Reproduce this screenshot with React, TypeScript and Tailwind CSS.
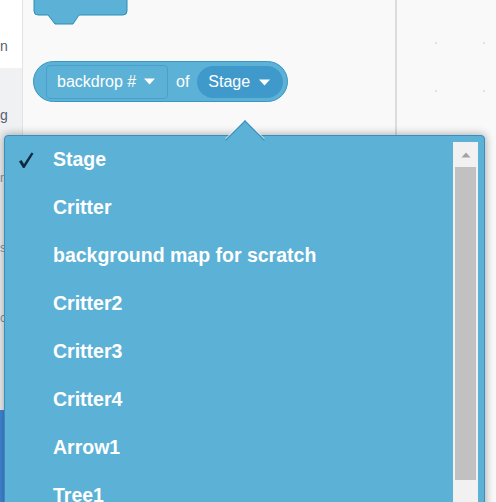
const items = [
  "Stage",
  "Critter",
  "background map for scratch",
  "Critter2",
  "Critter3",
  "Critter4",
  "Arrow1",
  "Tree1",
];

function Caret({ className = "" }: { className?: string }) {
  return (
    <svg width="11" height="7" viewBox="0 0 11 7" className={className}>
      <polygon points="0,0.5 11,0.5 5.5,6.5" fill="#ffffff" />
    </svg>
  );
}

function Check() {
  return (
    <svg width="16" height="17" viewBox="0 0 16 17">
      <path d="M1,9.5 L3.5,8 L6,12 L13.5,0.5 L15.5,1.5 L6.5,16 L5,16 Z" fill="#0f2a3f" />
    </svg>
  );
}

function CategoryStrip() {
  return (
    <aside className="w-[23px] shrink-0 border-r border-[#e3e3e3] flex flex-col text-[14px] text-[#575e75] leading-none">
      <div className="h-[68px] bg-white pt-[39px]">
        <span>n</span>
      </div>
      <div className="h-[62px] bg-[#f0f1f2] pt-[40px]">
        <span>g</span>
      </div>
      <div className="h-[280px] bg-[#eef0f2] flex flex-col pt-[42px] gap-[58px] text-[12px] text-[#8a8f99]">
        <span>n</span>
        <span>s</span>
        <span>c</span>
      </div>
      <div className="flex-1 bg-[#eef0f2] flex">
        <div className="w-[4px] bg-[#4388d9]" />
      </div>
    </aside>
  );
}

function Palette() {
  return (
    <section className="w-[374px] shrink-0 border-r-2 border-[#dcdcdc] bg-[#f9f9f9] pl-[10px] flex flex-col">
      <svg width="96" height="26" viewBox="0 0 96 26" className="block">
        <path
          d="M1,-2 L1,11 Q1,15 5,15 L15,15 L22,24 L40,24 L46,15 L90,15 Q94,15 94,11 L94,-2 Z"
          fill="#5cb1d6"
          stroke="#2e8eb8"
          strokeWidth="1"
        />
      </svg>
      <div className="mt-[35px] h-[41px] w-[255px] rounded-full border border-[#3a95c2] bg-[#5cb1d6] flex items-center pl-[12px] pr-[3px] text-[16px] text-white">
        <div className="h-[34px] w-[122px] rounded-[4px] border border-[#4a9fcb] flex items-center pl-[10px] gap-[8px]">
          <span>backdrop #</span>
          <Caret />
        </div>
        <span className="ml-[8px]">of</span>
        <div className="ml-[8px] h-[32px] w-[86px] rounded-full bg-[#3f9acb] flex items-center pl-[11px] gap-[9px] mt-[1px]">
          <span>Stage</span>
          <Caret />
        </div>
      </div>
    </section>
  );
}

function Dropdown() {
  return (
    <div className="absolute left-[4px] top-[135px] w-[481px] h-[390px] rounded-[4px] border border-[#3a8dbd] bg-[#5cb1d6] shadow-[0_0_8px_1px_rgba(0,0,0,0.3)]">
      <div className="absolute left-[226px] top-[-10px] w-[28px] h-[28px] rotate-45 bg-[#5cb1d6] border-l border-t border-[#3a8dbd] shadow-[-1px_-1px_0_0_rgba(255,255,255,0.6)]" />
      <ul className="relative flex flex-col">
        {items.map((label, i) => (
          <li key={label} className="h-[48px] flex items-center pl-[13px]">
            <span className="w-[35px] flex items-center">{i === 0 ? <Check /> : null}</span>
            <span className="text-[19.5px] font-bold text-white">{label}</span>
          </li>
        ))}
      </ul>
      <div className="absolute right-[6px] top-[6px] bottom-0 w-[25px] bg-[#f1f1f1] flex flex-col">
        <div className="h-[25px] flex items-center justify-center">
          <svg width="10" height="6" viewBox="0 0 10 6">
            <polygon points="5,0.5 9.5,5.5 0.5,5.5" fill="#a3a3a3" />
          </svg>
        </div>
        <div className="mx-[2px] h-[313px] bg-[#c1c1c1]" />
      </div>
    </div>
  );
}

export default function App() {
  return (
    <div className="relative w-[496px] h-[502px] overflow-hidden flex bg-[#f9f9f9] font-['Liberation_Sans',Arial,sans-serif]">
      <CategoryStrip />
      <Palette />
      <div className="flex-1 bg-[#f9f9f9] bg-[radial-gradient(circle,#e2e2e2_1px,transparent_1.5px)] bg-[length:48px_48px] bg-[position:15px_19px]" />
      <Dropdown />
    </div>
  );
}
